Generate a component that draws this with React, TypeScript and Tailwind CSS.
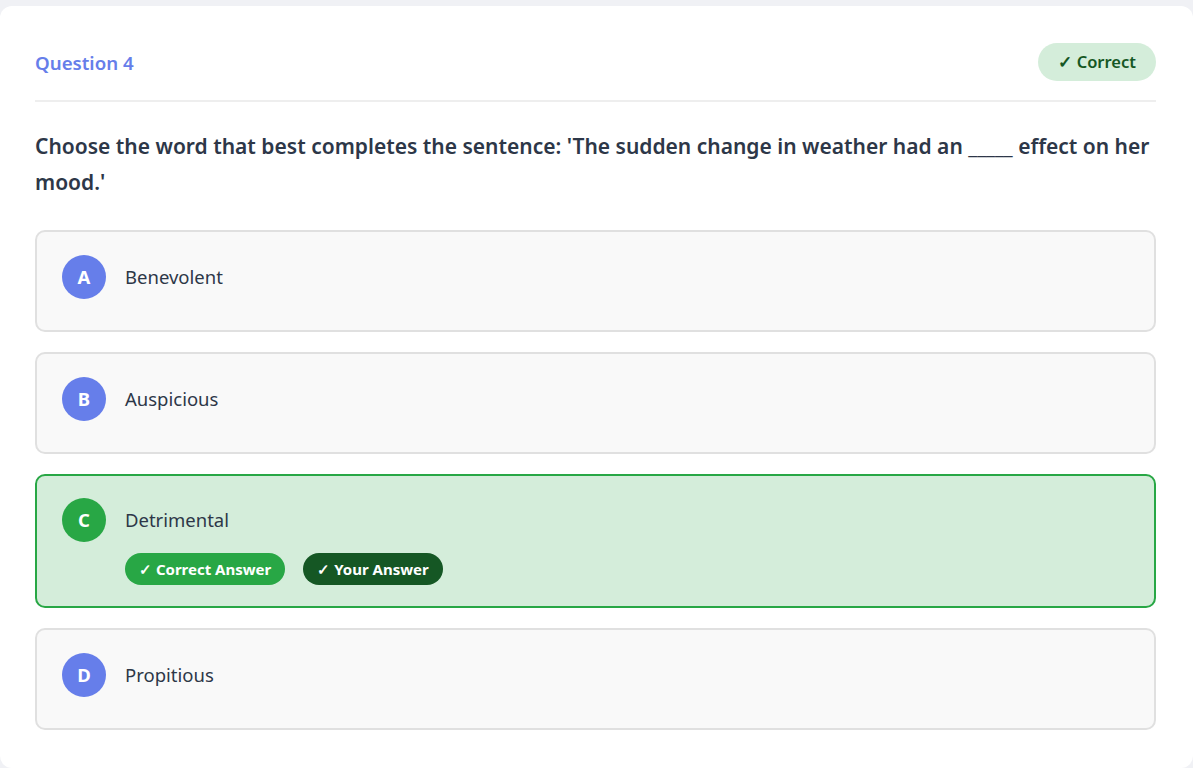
import React from "react";

type Opt = { letter: string; text: string; correct?: boolean };

const options: Opt[] = [
  { letter: "A", text: "Benevolent" },
  { letter: "B", text: "Auspicious" },
  { letter: "C", text: "Detrimental", correct: true },
  { letter: "D", text: "Propitious" },
];

function Option({ o }: { o: Opt }) {
  if (o.correct) {
    return (
      <div className="rounded-[10px] border-2 border-[#28a745] bg-[#d4edda] px-[25px] pt-[22px] pb-[21px]">
        <div className="flex items-start gap-[19px]">
          <div className="flex h-[44px] w-[44px] shrink-0 items-center justify-center rounded-full bg-[#28a745] text-[18.5px] font-bold text-white">
            {o.letter}
          </div>
          <div className="flex flex-col">
            <div className="flex h-[44px] items-center text-[18.5px] text-[#2d3748]">{o.text}</div>
            <div className="mt-[11px] flex gap-[18px]">
              <span className="flex h-[32px] items-center rounded-full bg-[#28a745] px-[14px] text-[15px] font-bold text-white">
                ✓ Correct Answer
              </span>
              <span className="flex h-[32px] items-center rounded-full bg-[#155724] px-[14px] text-[15px] font-bold text-white">
                ✓ Your Answer
              </span>
            </div>
          </div>
        </div>
      </div>
    );
  }
  return (
    <div className="rounded-[10px] border-2 border-[#e0e0e0] bg-[#f9f9f9] px-[25px] pt-[23px] pb-[31px]">
      <div className="flex items-center gap-[19px]">
        <div className="flex h-[44px] w-[44px] shrink-0 items-center justify-center rounded-full bg-[#667eea] text-[18.5px] font-bold text-white">
          {o.letter}
        </div>
        <div className="text-[18.5px] text-[#2d3748]">{o.text}</div>
      </div>
    </div>
  );
}

export default function App() {
  return (
    <div
      className="min-h-[768px] bg-[#f0f1f5] pt-[6px]"
      style={{ fontFamily: '"Noto Sans", "Open Sans", sans-serif' }}
    >
      <div className="rounded-[12px] bg-white pl-[35px] pr-[37px] pt-[37px] pb-[38px]">
        <div className="flex items-center justify-between border-b-2 border-[#eeeeee] pb-[19px]">
          <div className="pt-[3px] text-[18.7px] font-semibold text-[#667eea]">Question 4</div>
          <div className="flex h-[38px] items-center rounded-full bg-[#d4edda] px-[20px] text-[16.5px] font-semibold text-[#155724]">
            ✓ Correct
          </div>
        </div>
        <div className="mt-[26px] text-[21px] font-semibold leading-[36px] text-[#2d3748]">
          Choose the word that best completes the sentence: 'The sudden change in weather had an _____ effect on her mood.'
        </div>
        <div className="mt-[30px] flex flex-col gap-[20px]">
          {options.map((o) => (
            <Option key={o.letter} o={o} />
          ))}
        </div>
      </div>
    </div>
  );
}
